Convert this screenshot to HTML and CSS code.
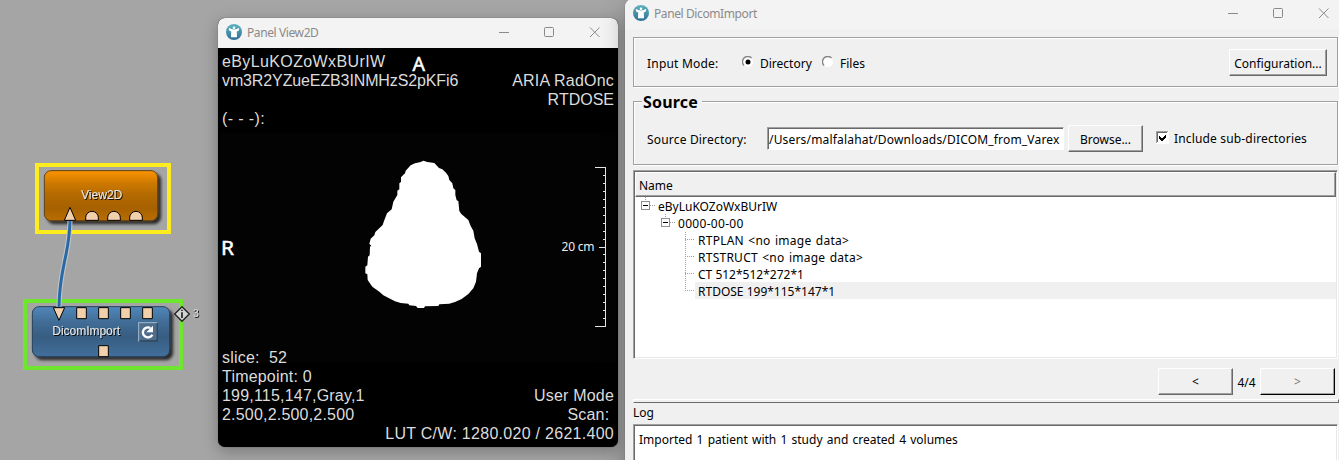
FILE: index.html
```html
<!DOCTYPE html>
<html lang="en">
<head>
<meta charset="utf-8">
<title>DICOM import network</title>
<link rel="stylesheet" href="styles.css">
</head>
<body>
<svg width="0" height="0" class="defs">
  <defs>
    <linearGradient id="logoFill" x1="0" y1="0" x2="0" y2="1"><stop offset="0" stop-color="#5fb3bf"/><stop offset="1" stop-color="#2f6f95"/></linearGradient>
    <symbol id="logo" viewBox="0 0 16 16">
      <circle cx="8" cy="8" r="8" fill="url(#logoFill)"/>
      <circle cx="8" cy="3.8" r="1.300" fill="#fff"/>
      <path d="M2.8 3.800 L5.3 5 Q8 5.800 10.7 5 L13.2 3.800 L12.800 6.6 L10.800 7.6 L11 13.2 H5 L5.200 7.6 L3.200 6.6 Z" fill="#fff"/>
    </symbol>
    <symbol id="caption" viewBox="0 0 104 12">
      <g fill="none" stroke="#898989"><path d="M1 6.5H11"/><rect x="46.5" y="1.500" width="9" height="9" rx="1"/><path d="M92 1.500L101.500 11M101.500 1.500L92 11"/></g>
    </symbol>
  </defs>
</svg>
<main class="desktop">
  <svg class="network" viewBox="0 0 218 460" width="218" height="460">
    <defs>
      <linearGradient id="orange" x1="0" y1="0" x2="0" y2="1"><stop offset="0" stop-color="#fc9403"/><stop offset=".25" stop-color="#cd7900"/><stop offset=".5" stop-color="#b26900"/><stop offset=".75" stop-color="#a66200"/><stop offset="1" stop-color="#b96d00"/></linearGradient>
      <linearGradient id="blue" x1="0" y1="0" x2="0" y2="1"><stop offset="0" stop-color="#5087ba"/><stop offset=".3" stop-color="#416d97"/><stop offset=".6" stop-color="#385d81"/><stop offset="1" stop-color="#416f9b"/></linearGradient>
      <filter id="drop" x="-10%" y="-15%" width="125%" height="140%"><feDropShadow dx="9" dy="9" stdDeviation="5" flood-color="#000" flood-opacity=".75"/></filter>
      <filter id="textDrop"><feDropShadow dx="3" dy="3" stdDeviation="1" flood-color="#000" flood-opacity=".85"/></filter>
    </defs>
    <g transform="translate(0 150) scale(.33333)">
      <rect x="111" y="45" width="396" height="201" fill="none" stroke="#ffec1f" stroke-width="12"/>
      <rect x="75" y="453" width="468" height="201" fill="none" stroke="#6ee62e" stroke-width="12"/>
      <rect x="133" y="62" width="340" height="150" rx="20" fill="url(#orange)" stroke="#5e4218" stroke-width="3" filter="url(#drop)"/>
      <rect x="97" y="470" width="412" height="150" rx="20" fill="url(#blue)" stroke="#263f58" stroke-width="3" filter="url(#drop)"/>
      <path d="M210 212C208 320 178 350 177 472" fill="none" stroke="#c4c8cc" stroke-width="15"/>
      <path d="M210 212C208 320 178 350 177 472" fill="none" stroke="#2b69a5" stroke-width="9"/>
      <g fill="#f2d0ab" stroke="#000" stroke-width="3">
        <path d="M210 172L227 211H193Z"/>
        <path d="M257 211V203A19 19 0 0 1 295 203V211Z"/><path d="M323 211V203A19 19 0 0 1 361 203V211Z"/><path d="M389 211V203A19 19 0 0 1 427 203V211Z"/>
        <path d="M160 473H194L177 511Z"/>
        <path d="M230 473h29v33h-29ZM296 473h29v33h-29ZM362 473h29v33h-29ZM428 473h29v33h-29ZM296 587h29v33h-29Z"/>
      </g>
      <g class="node-label" filter="url(#textDrop)">
        <text x="243" y="148" textLength="124" lengthAdjust="spacingAndGlyphs">View2D</text>
        <text x="157" y="556" textLength="203" lengthAdjust="spacingAndGlyphs">DicomImport</text>
      </g>
      <rect x="416" y="518" width="54" height="55" fill="#4e6d8d" stroke="#a3bbd2" stroke-width="3"/>
      <path d="M418 573H471V519" fill="none" stroke="#20384f" stroke-width="4"/>
      <path d="M451 534A15 15 0 1 0 457 554" fill="none" stroke="#fff" stroke-width="7"/>
      <path d="M459 527V547H439Z" fill="#fff"/>
      <path d="M546 470L568 492L546 514L524 492Z" fill="#d2d2d2" stroke="#222" stroke-width="4"/>
      <path d="M546 487V504M546 479V483" stroke="#222" stroke-width="5"/>
      <text class="count" x="579" y="501" filter="url(#textDrop)">3</text>
    </g>
  </svg>

  <section class="window view2d">
    <header class="titlebar"><svg class="logo"><use href="#logo"/></svg><h1 class="title">Panel View2D</h1><svg class="caption"><use href="#caption"/></svg></header>
    <div class="viewport">
      <svg class="slice" viewBox="218 48 400 399" width="400" height="399">
        <rect x="220" y="133" width="396" height="229" fill="#030303"/>
        <path transform="translate(340 140) scale(.33333)" fill="#fff" d="M242 66L250 62L262 66L283 69L297 84L307 88L318 98L325 108L328 120L337 130L340 145L346 150V165L350 181L355 183L358 213L364 222L385 240L392 258L400 272L404 295L411 312L417 335L423 340V380L417 385L411 400L408 425L400 445L385 462L365 477L345 486L328 491L298 493L295 498L255 499L252 504H233L228 498L208 496L205 491L182 489L165 484L140 471L130 466L118 455L97 440L83 420L82 403L76 400V380L82 376L84 350L89 346L90 320L94 317L88 312L92 296L103 286L106 276L128 255L132 243L141 220L155 208L160 185L172 165V152L178 148V130L183 126V112L195 100L197 92L212 76L225 70Z"/>
        <path fill="none" stroke="#e6e6e6" shape-rendering="crispEdges" d="M595 167.500H605.500V326.500H595M599 247.500h6M603 175.500h2M603 183.500h2M603 191.500h2M603 199.500h2M603 207.500h2M603 215.500h2M603 223.500h2M603 231.500h2M603 239.500h2M603 254.500h2M603 262.500h2M603 270.500h2M603 278.500h2M603 286.500h2M603 294.500h2M603 302.500h2M603 310.500h2M603 318.500h2"/>
        <text class="ruler" x="561.500" y="251" textLength="33">20 cm</text>
        <text class="orient" x="412.500" y="71" textLength="12.500" lengthAdjust="spacingAndGlyphs">A</text>
        <text class="orient" x="221" y="255" textLength="13" lengthAdjust="spacingAndGlyphs">R</text>
      </svg>
      <div class="overlay">
        <div class="notes"><p class="patient">eByLuKOZoWxBUrIW</p><p class="series">vm3R2YZueEZB3INMHzS2pKFi6</p><p>&nbsp;</p><p class="patient">(- - -):</p></div>
        <div class="notes right"><p>&nbsp;</p><p>ARIA RadOnc</p><p class="modality">RTDOSE</p></div>
        <div class="notes low"><p>slice:&nbsp; 52</p><p>Timepoint: 0</p><p>199,115,147,Gray,1</p><p>2.500,2.500,2.500</p><p>&nbsp;</p></div>
        <div class="notes right low"><p>User Mode</p><p>Scan:&nbsp;</p><p class="lut">LUT C/W: 1280.020 / 2621.400</p></div>
      </div>
    </div>
  </section>

  <section class="window import">
    <header class="titlebar"><svg class="logo"><use href="#logo"/></svg><h1 class="title">Panel DicomImport</h1><svg class="caption"><use href="#caption"/></svg></header>
    <div class="content">
      <div class="group mode">
        <span class="label mode-label">Input Mode:</span>
        <svg class="radio" viewBox="0 0 12 12"><circle cx="6" cy="6" r="5" fill="#fff"/><path d="M2 9.500A5.300 5.300 0 0 1 9.500 2" fill="none" stroke="#858585" stroke-width="1.400"/><circle cx="6" cy="6" r="2.500"/></svg>
        <span class="label directory">Directory</span>
        <svg class="radio" viewBox="0 0 12 12"><circle cx="6" cy="6" r="5" fill="#fff"/><path d="M2 9.500A5.300 5.300 0 0 1 9.500 2" fill="none" stroke="#858585" stroke-width="1.400"/></svg>
        <span class="label">Files</span>
        <button class="button config">Configuration...</button>
      </div>
      <div class="group source">
        <h2 class="legend">Source</h2>
        <div class="source-row">
          <span class="label source-label">Source Directory:</span>
          <div class="field"><span>/Users/malfalahat/Downloads/DICOM_from_Varex</span></div>
          <button class="button browse">Browse...</button>
          <svg class="check" viewBox="0 0 13 13" shape-rendering="crispEdges"><path fill="#fff" d="M0 0h13v13H0z"/><path d="M.5 12V.5H12" fill="none" stroke="#a0a0a0"/><path d="M1.500 11V1.500H11" fill="none" stroke="#696969"/><path d="M3 5v3l2 2h1l4-4V3L5.500 7.500Z"/></svg>
          <span class="label include">Include sub-directories</span>
        </div>
      </div>
      <div class="tree">
        <div class="tree-head">Name</div>
        <ul class="rows">
          <li><svg class="twig" width="22" height="17"><path class="dots" d="M10.500 0V3M15 8.500h5"/><rect x="6.500" y="4.500" width="8" height="8"/><path class="minus" d="M8 8.500h5"/></svg><span>eByLuKOZoWxBUrIW</span></li>
          <li><svg class="twig" width="42" height="17"><path class="dots" d="M30.500 0V3M35 8.500h5"/><rect x="26.500" y="4.500" width="8" height="8"/><path class="minus" d="M28 8.500h5"/></svg><span class="date">0000-00-00</span></li>
          <li><svg class="twig" width="60" height="17"><path class="dots" d="M50.500 1V17M50 8.500h9"/></svg><span class="leaf plain">RTPLAN &lt;no image data&gt;</span></li>
          <li><svg class="twig" width="60" height="17"><path class="dots" d="M50.500 0V17M50 8.500h9"/></svg><span class="leaf plain">RTSTRUCT &lt;no image data&gt;</span></li>
          <li><svg class="twig" width="60" height="17"><path class="dots" d="M50.500 1V17M50 8.500h9"/></svg><span class="leaf">CT 512*512*272*1</span></li>
          <li><svg class="twig" width="60" height="17"><path class="dots" d="M50.500 0V9M50 8.500h9"/></svg><span class="leaf selected">RTDOSE 199*115*147*1</span></li>
        </ul>
      </div>
      <div class="pager"><button class="button">&lt;</button><span>4/4</span><button class="button next" disabled>&gt;</button></div>
      <div class="splitter"></div>
      <h3 class="log-title">Log</h3>
      <div class="log">Imported 1 patient with 1 study and created 4 volumes</div>
    </div>
  </section>
</main>
</body>
</html>
```

FILE: styles.css
```css
* { box-sizing: border-box; }
body { margin: 0; font: 12px/17px "Noto Sans", "Open Sans", sans-serif; color: #000; }
h1, h2, h3, p, ul { margin: 0; padding: 0; font: inherit; list-style: none; }
svg { display: block; flex: none; }
.defs { position: absolute; }
.desktop { position: relative; width: 1339px; height: 460px; overflow: hidden; background: #a5a5a5; }
.node-label { font: 36px "Liberation Sans", Arial, sans-serif; fill: #e6e6e6; }
.count { font: 31px "Liberation Sans", Arial, sans-serif; fill: #d8d8d8; }

/* windows float on the canvas */
.window { position: absolute; overflow: hidden; }
.view2d { left: 218px; top: 18px; width: 400px; height: 429px; border-radius: 7px; box-shadow: 0 4px 16px rgba(0,0,0,.28), 0 0 1px #555; background: #000; }
.import { left: 625px; top: -1px; width: 740px; height: 480px; border-radius: 8px; background: #f0f0f0; box-shadow: 0 8px 24px rgba(0,0,0,.3), 0 0 1px #555; }
.titlebar { display: flex; align-items: center; height: 30px; padding: 0 0 2px 8px; background: #f3f3f3; color: #8a8a8a; }
.import .titlebar { padding-right: 18px; }
.title { letter-spacing: -.4px; }
.logo { width: 16px; height: 16px; margin-right: 5px; }
.caption { width: 104px; height: 12px; margin-left: auto; margin-right: 16px; }

.viewport { display: grid; height: 399px; color: #dcdcdc; }
.slice, .overlay { grid-area: 1 / 1; }
.overlay { display: grid; grid-template-columns: 150px 1fr; grid-template-rows: 1fr 1fr; padding: 4px; z-index: 1; }
.notes { font: 16px/19px "Liberation Sans", Arial, sans-serif; letter-spacing: .2px; white-space: nowrap; }
.patient { letter-spacing: .38px; }
.series { letter-spacing: -.12px; }
.modality { letter-spacing: 0; }
.lut { letter-spacing: .28px; }
.right { text-align: right; }
.low { align-self: end; }
.ruler { font: 12px "Noto Sans", sans-serif; fill: #ededed; }
.orient { font: 19px "Noto Sans", sans-serif; fill: #fff; stroke: #fff; stroke-width: .5px; }

.content { padding: 8px 0 0 8px; width: 713px; }
.label { white-space: nowrap; padding-top: 2px; }
.group { border: 1px solid #a0a0a0; box-shadow: 1px 1px 0 #fff, inset 1px 1px 0 #fff; }
.mode { display: flex; align-items: center; height: 50px; padding: 0 10px 0 13px; }
.mode-label { width: 95px; letter-spacing: .2px; }
.radio { width: 12px; height: 12px; margin-right: 6px; }
.directory { width: 62px; }
.button { width: 75px; height: 27px; padding: 0; font: inherit; color: #000; background: #f0f0f0; border: 1px solid; border-color: #fff #696969 #696969 #fff; box-shadow: inset -1px -1px 0 #a0a0a0; white-space: nowrap; }
.config { width: 98px; margin-left: auto; padding-top: 2px; }
.browse { padding-top: 2px; }
.source { margin-top: 14px; height: 64px; }
.legend { width: 60px; height: 17px; margin: -9px 0 0 8px; padding-left: 1px; background: #f0f0f0; font: bold 16px/19px "Noto Sans", sans-serif; letter-spacing: .2px; white-space: nowrap; }
.source-row { display: flex; align-items: center; height: 27px; margin-top: 15px; padding-left: 13px; }
.source-label { width: 120px; letter-spacing: .18px; }
.field { width: 297px; height: 23px; margin-right: 4px; padding: 1px 0 0 1px; background: #fff; border: 1px solid; border-color: #a0a0a0 #fff #fff #a0a0a0; box-shadow: inset 1px 1px 0 #696969; white-space: nowrap; overflow: hidden; line-height: 22px; letter-spacing: .18px; }
.check { width: 13px; height: 13px; margin: -2px 5px 0 13px; }
.include { margin-top: -2px; letter-spacing: .16px; }
.tree { margin-top: 5px; width: 705px; height: 189px; background: #fff; border: 1px solid; border-color: #a0a0a0 #fff #fff #a0a0a0; box-shadow: inset 1px 1px 0 #696969, inset -1px -1px 0 #e8e8e8; padding: 1px 1px 0 1px; }
.tree-head { height: 25px; padding: 4px 0 0 3px; background: #f0f0f0; border: 1px solid; border-color: #fff #696969 #696969 #fff; box-shadow: inset -1px -1px 0 #a0a0a0; }
.rows li { display: flex; height: 17px; line-height: 20px; white-space: nowrap; }
.rows span { padding-left: 1px; }
.rows .date { letter-spacing: .3px; }
.rows .leaf { flex: 1; padding-left: 3px; }
.rows .plain { letter-spacing: .25px; word-spacing: 1px; }
.rows .selected { background: #f0f0f0; }
.twig { fill: none; shape-rendering: crispEdges; }
.twig rect { stroke: #909090; }
.dots { stroke: #a0a0a0; stroke-dasharray: 1 1; }
.minus { stroke: #000; }
.pager { display: flex; align-items: center; justify-content: flex-end; width: 702px; height: 27px; margin-top: 9px; }
.pager span { width: 27px; text-align: center; padding-top: 2px; }
.next { color: #777; border-color: #fff #000 #000 #fff; }
.splitter { width: 706px; height: 4px; margin-top: 4px; border: 1px solid; border-color: #fff #696969 #696969 #fff; }
.log-title { height: 21px; line-height: 19px; }
.log { width: 705px; height: 60px; padding: 6px 5px; background: #fff; border: 1px solid; border-color: #a0a0a0 #fff #fff #a0a0a0; box-shadow: inset 1px 1px 0 #696969, inset -1px 0 0 #e8e8e8; word-spacing: 1.1px; }
```
